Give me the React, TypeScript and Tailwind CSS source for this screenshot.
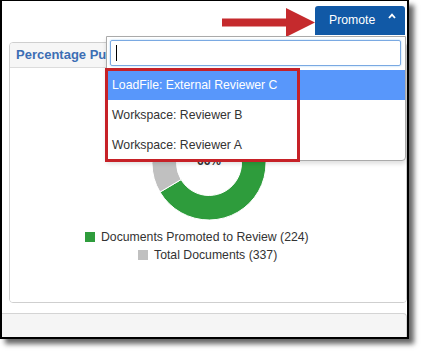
import React from 'react';

const CX = 58;
const CY = 58;
const R_OUT = 57;
const R_IN = 32.5;

const promoted = 224;
const total = 337;

function point(r: number, deg: number) {
  const a = (deg * Math.PI) / 180;
  return `${(CX + r * Math.sin(a)).toFixed(2)} ${(CY - r * Math.cos(a)).toFixed(2)}`;
}

function sector(a0: number, a1: number) {
  const large = a1 - a0 > 180 ? 1 : 0;
  return [
    `M ${point(R_OUT, a0)}`,
    `A ${R_OUT} ${R_OUT} 0 ${large} 1 ${point(R_OUT, a1)}`,
    `L ${point(R_IN, a1)}`,
    `A ${R_IN} ${R_IN} 0 ${large} 0 ${point(R_IN, a0)}`,
    'Z',
  ].join(' ');
}

function Donut() {
  const split = (promoted / total) * 360;
  return (
    <svg width="116" height="116" viewBox="0 0 116 116" className="ml-[141px] mt-[37px] shrink-0">
      <path d={sector(0, split)} fill="#2e9c3c" stroke="#fff" strokeWidth="1" />
      <path d={sector(split, 359.99)} fill="#c0c0c0" stroke="#fff" strokeWidth="1" />
      <text x="58" y="60" textAnchor="middle" fontSize="12" fontWeight="bold" fill="#333">
        66%
      </text>
    </svg>
  );
}

function LegendRow({ color, label, offset }: { color: string; label: string; offset: string }) {
  return (
    <div className={`flex h-[18px] items-center gap-[6px] ${offset}`}>
      <span className={`h-[10px] w-[10px] ${color}`} />
      <span>{label}</span>
    </div>
  );
}

function Panel() {
  return (
    <div className="ml-[7px] mt-[41px] flex h-[261px] flex-col overflow-hidden rounded-[4px] border border-[#cfcfcf]">
      <div className="flex h-[25px] shrink-0 items-center border-b border-[#dcdcdc] bg-[#f6f6f6] pl-[6px] text-[13px] font-bold text-[#3c6eb4]">
        Percentage Pushed to Review
      </div>
      <div className="flex flex-1 flex-col bg-white">
        <Donut />
        <div className="mt-[7px] flex flex-col text-[12.25px] text-[#333]">
          <LegendRow color="bg-[#2e9c3c]" label="Documents Promoted to Review (224)" offset="ml-[75px]" />
          <LegendRow color="bg-[#c0c0c0]" label="Total Documents (337)" offset="ml-[128px]" />
        </div>
      </div>
    </div>
  );
}

const options = ['LoadFile: External Reviewer C', 'Workspace: Reviewer B', 'Workspace: Reviewer A'];

export default function App() {
  return (
    <div className="min-h-screen bg-white font-['Liberation_Sans',Arial,sans-serif]">
      <div className="relative h-[339px] w-[409px]">
        <div className="flex h-full w-full flex-col border-x-2 border-b-2 border-t border-black bg-white shadow-[5px_5px_5px_rgba(0,0,0,0.6)]">
          <Panel />
          <div className="mt-[10px] h-[24px] rounded-tr-[4px] border-r border-t border-[#d4d4d4] bg-[#f5f5f5]" />
        </div>

        {/* annotation arrow */}
        <svg className="absolute left-[220px] top-[6px]" width="96" height="33" viewBox="0 0 96 33">
          <polygon points="2,12.5 66,12.5 66,2 95,16.5 66,31 66,20.5 2,20.5" fill="#c52a2d" />
        </svg>

        {/* Promote button */}
        <div className="absolute left-[315px] top-[6px] flex h-[29px] w-[90px] items-center rounded-t-[3px] bg-[#1159a6] pl-[14px] text-[12.25px] text-white">
          Promote
          <svg className="absolute left-[73px] top-[7px]" width="8" height="6" viewBox="0 0 8 6">
            <polyline points="1,5 4,1.6 7,5" fill="none" stroke="#fff" strokeWidth="1.8" />
          </svg>
        </div>

        {/* dropdown */}
        <div className="absolute left-[106px] top-[36px] h-[125px] w-[300px] rounded-b-[4px] border border-[#aaa] bg-white pt-[3px] shadow-[0_3px_4px_rgba(0,0,0,0.12)]">
          <div className="ml-[3px] flex h-[26px] w-[291px] items-center rounded-[2px] border border-[#7aa9e2] shadow-[0_0_2px_rgba(82,168,236,0.6)]">
            <span className="ml-[5px] h-[16px] w-px bg-black" />
          </div>
          <div className="mt-[4px] flex flex-col text-[12.25px]">
            {options.map((o, i) => (
              <div
                key={o}
                className={`flex h-[30px] items-center pl-[5px] ${i === 0 ? 'bg-[#5897fb] text-white' : 'text-[#333]'}`}
              >
                {o}
              </div>
            ))}
          </div>
        </div>

        {/* annotation box */}
        <div className="absolute left-[105px] top-[68px] h-[94px] w-[195px] border-[3px] border-[#c62127]" />
      </div>
    </div>
  );
}
